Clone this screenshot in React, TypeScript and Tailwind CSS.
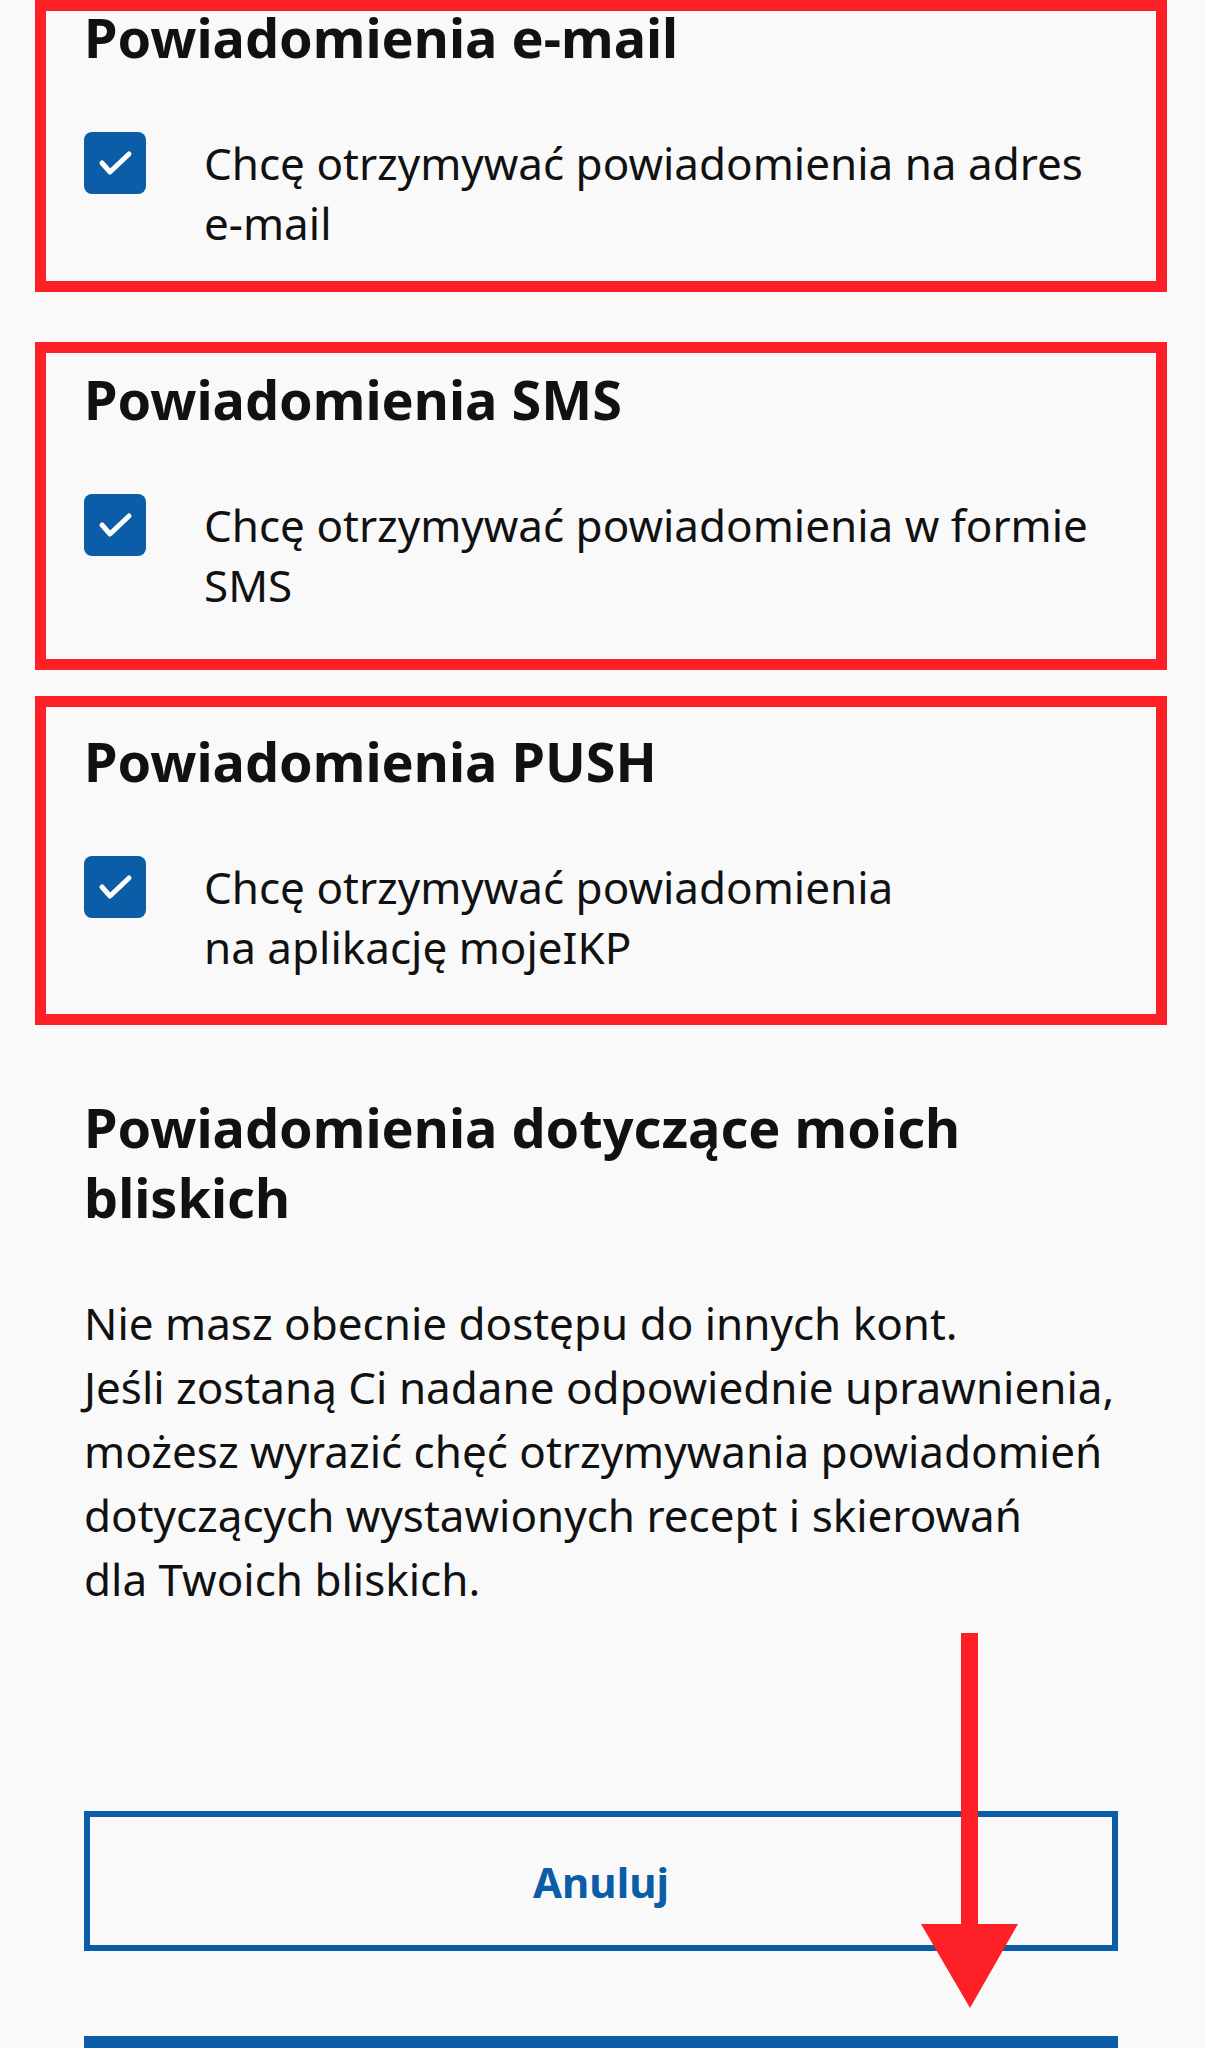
import { Fragment } from 'react';

type Section = {
  title: string;
  lines: string[];
  pad: string;
};

const SECTIONS: Section[] = [
  { title: 'Powiadomienia e-mail', lines: ['Chcę otrzymywać powiadomienia na adres', 'e-mail'], pad: 'pt-0 pb-[28px]' },
  { title: 'Powiadomienia SMS', lines: ['Chcę otrzymywać powiadomienia w formie', 'SMS'], pad: 'pt-[20px] pb-[44px]' },
  { title: 'Powiadomienia PUSH', lines: ['Chcę otrzymywać powiadomienia', 'na aplikację mojeIKP'], pad: 'pt-[28px] pb-[37px]' },
];

const INFO = [
  'Nie masz obecnie dostępu do innych kont.',
  'Jeśli zostaną Ci nadane odpowiednie uprawnienia,',
  'możesz wyrazić chęć otrzymywania powiadomień',
  'dotyczących wystawionych recept i skierowań',
  'dla Twoich bliskich.',
];

function Checkbox() {
  return (
    <span className="flex h-[62px] w-[62px] shrink-0 items-center justify-center rounded-[8px] bg-[#0a5da6]">
      <svg width="62" height="62" viewBox="0 0 62 62" fill="none">
        <polyline points="18,31 26,40 45,22" stroke="white" strokeWidth="5" strokeLinecap="round" strokeLinejoin="round" />
      </svg>
    </span>
  );
}

function NotifySection({ section, gap }: { section: Section; gap: string }) {
  return (
    <section className={`${gap} border-[11px] border-[#fe2027] px-[38px] ${section.pad}`}>
      <h2 className="text-[54px] font-bold leading-[52px] text-[#111]">{section.title}</h2>
      <label className="mt-[69px] flex items-start gap-[58px]">
        <Checkbox />
        <span className="pt-[1px] text-[44px] leading-[60px] whitespace-nowrap text-[#111]">
          {section.lines.map((l, i) => (
            <Fragment key={i}>
              {l}
              {i < section.lines.length - 1 && <br />}
            </Fragment>
          ))}
        </span>
      </label>
    </section>
  );
}

export default function App() {
  return (
    <div className="relative min-h-screen overflow-hidden bg-[#f9f9fa] pl-[35px] pr-[38px]" style={{ fontFamily: '"Noto Sans", "Open Sans", sans-serif' }}>
      {SECTIONS.map((s, i) => (
        <NotifySection key={s.title} section={s} gap={i === 0 ? 'mt-0' : i === 1 ? 'mt-[50px]' : 'mt-[26px]'} />
      ))}

      <div className="px-[49px]">
        <h2 className="mt-[67px] text-[54px] font-bold leading-[70px] text-[#111]">
          Powiadomienia dotyczące moich bliskich
        </h2>
        <p className="mt-[59px] text-[44px] leading-[64px] whitespace-nowrap text-[#111]">
          {INFO.map((l, i) => (
            <Fragment key={i}>
              {l}
              <br />
            </Fragment>
          ))}
        </p>

        <div className="mt-[200px] flex flex-col gap-[85px] pb-[60px]">
          <button className="flex h-[140px] w-full items-center justify-center border-[6px] border-[#0a5da6] text-[42px] font-bold text-[#0a5da6]">
            Anuluj
          </button>
          <button aria-label="Zapisz" className="h-[140px] w-full bg-[#0a5da6]" />
        </div>
      </div>

      {/* scroll-down marker drawn over the buttons */}
      <svg className="absolute left-[921px] top-[1633px]" width="97" height="375" viewBox="0 0 97 375">
        <rect x="40" y="0" width="17" height="292" fill="#fe2027" />
        <polygon points="0,291 97,291 49,375" fill="#fe2027" />
      </svg>
    </div>
  );
}
